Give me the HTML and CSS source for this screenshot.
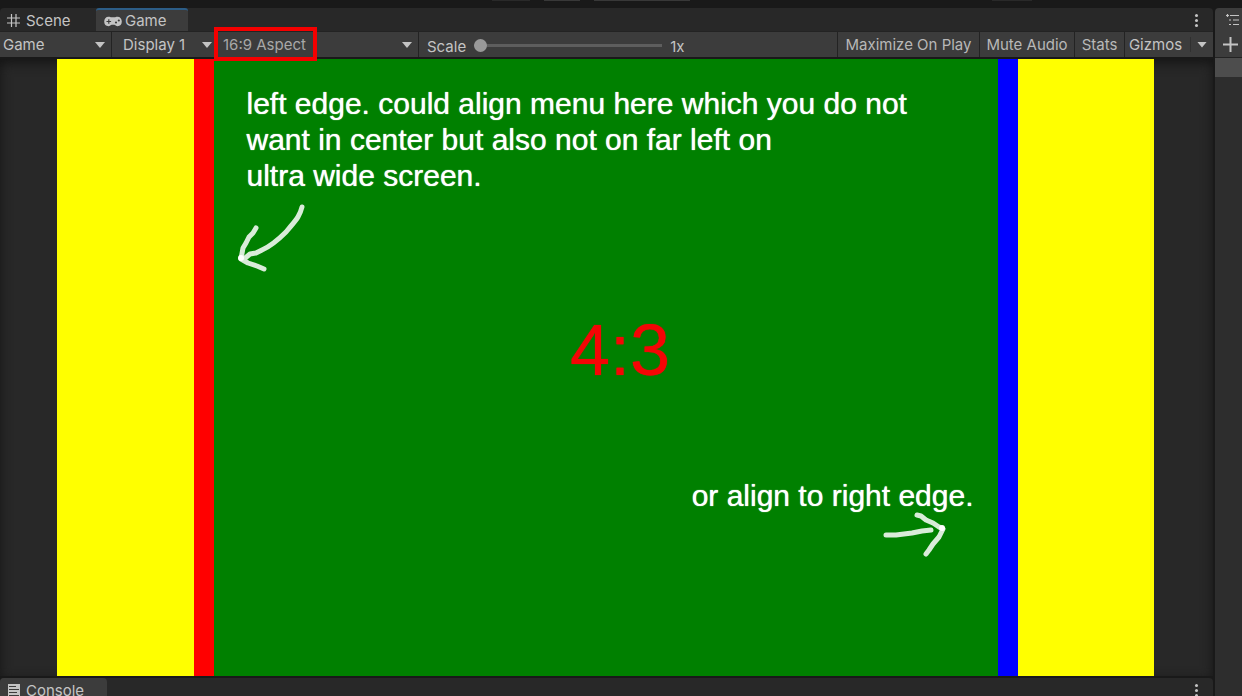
FILE: index.html
```html
<!DOCTYPE html>
<html lang="en">
<head>
<meta charset="utf-8">
<title>Game view</title>
<link rel="stylesheet" href="styles.css">
</head>
<body>
<div class="editor">
  <header class="topbar">
    <span class="stub stub-a"></span><span class="stub stub-b"></span><span class="stub stub-c"></span><span class="stub stub-d"></span>
  </header>
  <div class="workspace">
    <main class="main">
      <section class="panel game-panel">
        <nav class="tabs">
          <button class="tab scene-tab">
            <svg width="13" height="13" viewBox="0 0 13 13" fill="none" stroke="currentColor" stroke-width="1.2"><path d="M4.500 0v13M9 0v13M0 4h13M0 9h13"/></svg>
            Scene
          </button>
          <button class="tab active">
            <svg width="18" height="11" viewBox="0 0 18 11"><path fill="currentColor" d="M4.500 .7C1.800 .7 .2 2.800 .2 5.600c0 2.800 1.600 4.700 4.200 4.700C6 10.300 6.700 8.800 7.800 8.800h2.400c1.100 0 1.800 1.500 3.400 1.500 2.600 0 4.200-1.900 4.200-4.700 0-2.800-1.600-4.900-4.300-4.900-1.500 0-2 .6-3 .6h-3C6.500 1.300 6 .7 4.500 .7z"/><path stroke="#3c3c3c" stroke-width="1.200" d="M4.800 3.200v4.600M2.500 5.500h4.600"/><circle cx="12" cy="6.500" r="1.100" fill="#3c3c3c"/><circle cx="14.800" cy="4.500" r="1.100" fill="#3c3c3c"/></svg>
            Game
          </button>
          <button class="kebab" aria-label="Panel menu"><i></i><i></i><i></i></button>
        </nav>
        <div class="toolbar">
          <label class="pick pick-view"><select aria-label="View"><option>Game</option></select></label>
          <label class="pick pick-display"><select aria-label="Display"><option>Display 1</option></select></label>
          <label class="pick pick-aspect"><select aria-label="Aspect"><option>16:9 Aspect</option></select><span class="marker"></span></label>
          <div class="scale">
            <label for="scale">Scale</label>
            <input id="scale" type="range" min="1" max="5" value="1">
            <output for="scale">1x</output>
          </div>
          <button class="tool maximize">Maximize On Play</button>
          <button class="tool mute">Mute Audio</button>
          <button class="tool stats">Stats</button>
          <button class="tool gizmos">Gizmos</button>
          <button class="tool more" aria-label="Gizmo options"><span class="arrow"></span></button>
        </div>
        <div class="view">
          <div class="canvas">
            <div class="edge edge-left"></div>
            <div class="safe">
              <p class="note note-left">left edge. could align menu here which you do not<br>want in center but also not on far left on<br>ultra wide screen.</p>
              <svg class="sketch sketch-left" width="70" height="70" viewBox="0 0 70 70"><g fill="none" stroke="#d9ecd9" stroke-width="5" stroke-linecap="round" stroke-linejoin="round"><path d="M66 5C64 13 61 17 55 24L50 30C42 38 35 44 26 48L20 51 14 52 8 57"/><path d="M20 26l-3 5-4 4-3 6-3 5-2 11 7 4 9 3 7 3"/></g><circle cx="5" cy="56" r="3" fill="#fff"/></svg>
              <p class="ratio">4:3</p>
              <p class="note note-right">or align to right edge.</p>
              <svg class="sketch sketch-right" width="70" height="50" viewBox="0 0 70 50"><g fill="none" stroke="#d9ecd9" stroke-width="5" stroke-linecap="round" stroke-linejoin="round"><path d="M6 25h10l16-2 10-2 9-1"/><path d="M37 5l4 1 5 4 7 3 6 4 4 2-4 8-6 7-4 6-3 4"/></g><circle cx="62" cy="18" r="3" fill="#fff"/></svg>
            </div>
            <div class="edge edge-right"></div>
          </div>
        </div>
      </section>
      <section class="panel console-panel">
        <nav class="tabs">
          <button class="tab console-tab">
            <svg width="12" height="14" viewBox="0 0 12 14"><path fill="currentColor" d="M0 0h12v14H0z"/><path stroke="#3c3c3c" d="M1 2.500h7M1 5.500h10M1 8.500h8M1 11.500h10"/></svg>
            Console
          </button>
          <button class="kebab" aria-label="Console menu"><i></i><i></i><i></i></button>
        </nav>
      </section>
    </main>
    <aside class="side">
      <div class="side-tab"><svg width="16" height="13" viewBox="0 0 16 13" fill="none" stroke="currentColor" stroke-width="1.200"><path d="M0 1.500h3M4 1.500h9M3 6h2M7 6h6M3 10.500h2M7 10.500h6M1.500 0v3"/></svg></div>
      <button class="side-add" aria-label="Add"><svg width="15" height="15" viewBox="0 0 15 15" stroke="currentColor" stroke-width="2"><path d="M7.500 0v15M0 7.500h15"/></svg></button>
      <div class="side-row"></div>
      <div class="side-list"></div>
    </aside>
  </div>
</div>
</body>
</html>
```

FILE: styles.css
```css
* { box-sizing: border-box; }
html, body { height: 100%; }
body { margin: 0; background: #191919; color: #c4c4c4; font: 15px/20px Inter, sans-serif; overflow: hidden; }
button, select { font: inherit; color: inherit; background: none; border: 0; margin: 0; padding: 0; border-radius: 0; }
p { margin: 0; }
svg { display: block; flex: none; }

.editor { height: 100%; display: flex; flex-direction: column; }
.topbar { height: 8px; flex: none; display: flex; padding-left: 492px; }
.stub { height: 1px; background: #383838; }
.stub-a { width: 38px; background: #292929; }
.stub-b { width: 36px; margin-left: 14px; }
.stub-c { width: 96px; margin-left: 14px; }
.stub-d { width: 40px; margin-left: 302px; background: #292929; }
.workspace { flex: 1; min-height: 0; display: flex; gap: 2px; }
.main { flex: 1; min-width: 0; display: flex; flex-direction: column; gap: 2px; }
.panel { background: #282828; border-radius: 4px 4px 0 0; overflow: hidden; }
.game-panel { flex: 1; min-height: 0; display: flex; flex-direction: column; }
.console-panel { height: 18px; flex: none; }

.tabs { height: 24px; flex: none; display: flex; align-items: stretch; }
.tab { display: flex; align-items: center; gap: 6px; padding: 1px 20px 0 7px; }
.scene-tab { width: 96px; }
.active { width: 92px; padding: 0 0 0 8px; gap: 3px; background: #3c3c3c; border-top: 2px solid #2c5d87; border-radius: 3px 3px 0 0; }
.console-tab { width: 107px; padding-left: 8px; background: #3c3c3c; border-radius: 0 4px 0 0; }
.kebab { width: 20px; margin: 0 7px 0 auto; display: flex; flex-direction: column; align-items: center; justify-content: center; gap: 2px; }
.kebab i { width: 3px; height: 3px; border-radius: 50%; background: #c4c4c4; }

.toolbar { height: 25px; flex: none; display: flex; align-items: stretch; background: #3c3c3c; box-shadow: 0 -1px #232323; }
.pick { position: relative; flex: none; border-right: 1px solid #232323; }
.pick select { appearance: none; width: 100%; height: 100%; padding-left: 3px; outline: 0; }
.pick::after { content: ""; position: absolute; right: 6px; top: 10px; width: 10px; height: 6px; background: #c4c4c4; clip-path: polygon(0 0, 100% 0, 50% 100%); pointer-events: none; }
.pick-view { width: 112px; }
.pick-display { width: 106px; }
.pick-display select { padding-left: 11px; }
.pick-display::after { right: 5px; }
.pick-aspect { width: 201px; color: #a8a8a8; }
.pick-aspect select { padding-left: 5px; }
.marker { position: absolute; z-index: 2; left: -4px; top: -5px; width: 103px; height: 34px; border: 4px solid #f50000; }
.scale { flex: 1; min-width: 0; display: flex; align-items: center; padding-left: 8px; gap: 8px; }
.scale label, .scale output { padding-top: 4px; }
.scale input { appearance: none; width: 188px; height: 13px; margin: 2px 0 0; background: linear-gradient(#5e5e5e, #5e5e5e) center / 100% 3px no-repeat; }
.scale input::-webkit-slider-thumb { appearance: none; width: 13px; height: 13px; border-radius: 50%; background: #999; }
.tool { flex: none; border-left: 1px solid #232323; white-space: nowrap; color: #b8b8b8; }
.maximize { width: 142px; }
.mute { width: 95px; }
.stats { width: 50px; }
.gizmos { width: 66px; padding-right: 4px; color: #c4c4c4; }
.more { width: 23px; margin: 5px 0; padding-left: 6px; border-color: #303030; }
.arrow { display: block; width: 10px; height: 6px; background: #c4c4c4; clip-path: polygon(0 0, 100% 0, 50% 100%); }

.view { flex: 1; min-height: 0; display: flex; justify-content: center; padding-right: 2px; border-top: 2px solid #191919; box-shadow: inset 0 4px 12px #151515; }
.canvas { height: 100%; aspect-ratio: 16 / 9; display: flex; justify-content: center; background: #ff0; }
.edge { width: 20px; flex: none; }
.edge-left { background: #f00; }
.edge-right { background: #00f; }
.safe { position: relative; width: 784px; display: flex; flex-direction: column; background: #008000; color: #fff; font-family: "Liberation Sans", Arial, sans-serif; }
.note { font-size: 30px; line-height: 36px; white-space: nowrap; text-shadow: 0 0 1px #fff; }
.note-left { padding: 27px 0 0 33px; }
.ratio { margin: auto; padding: 28px 0 0 29px; color: #f50505; font-size: 72px; line-height: 80px; text-shadow: 0 0 1px #f50505; }
.note-right { align-self: flex-end; padding: 0 24px 162px 0; }
.sketch { position: absolute; }
.sketch-left { left: 22px; top: 143px; }
.sketch-right { right: 48px; top: 451px; }

.side { width: 27px; flex: none; display: flex; flex-direction: column; background: #3c3c3c; border-radius: 4px 0 0 0; overflow: hidden; }
.side-tab { height: 23px; padding: 6px 0 0 11px; }
.side-add { height: 27px; padding-left: 8px; display: flex; align-items: center; border-bottom: 1px solid #232323; }
.side-row { height: 19px; background: #4d4d4d; }
.side-list { flex: 1; background: #2d2d2d; }
```
